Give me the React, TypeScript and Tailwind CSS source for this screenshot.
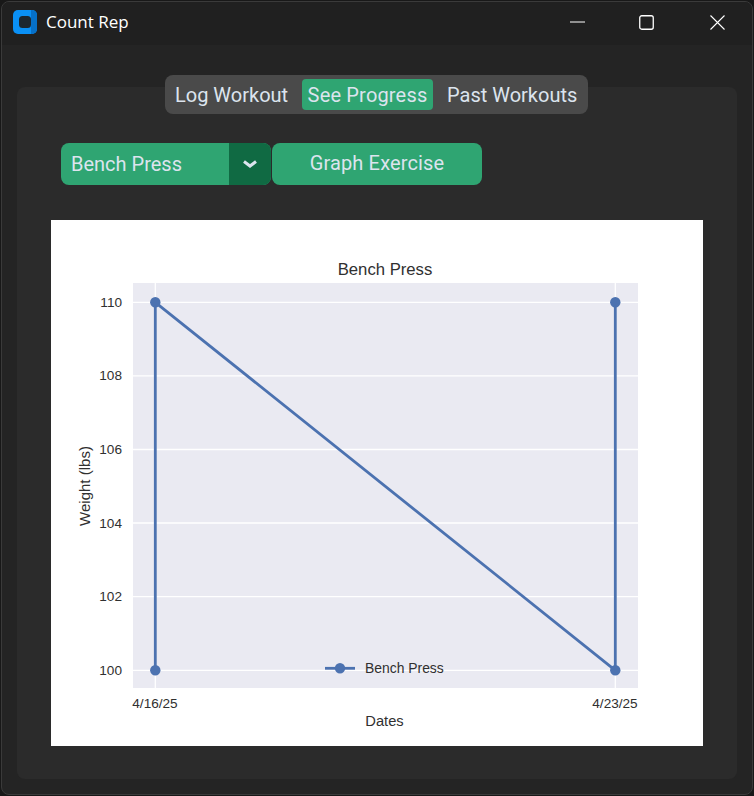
export default function App() {
  const grid = [
    { y: 302.3, label: "110" },
    { y: 375.9, label: "108" },
    { y: 449.5, label: "106" },
    { y: 523, label: "104" },
    { y: 596.6, label: "102" },
    { y: 670.3, label: "100" },
  ];
  const ox = 51;
  const oy = 220;
  return (
    <div className="w-[754px] h-[796px] bg-[#181818] p-px overflow-hidden">
      <div className="h-full flex flex-col bg-[#242424] rounded-[8px] border border-[#3a3a3a] overflow-hidden">
        <div className="h-[43px] shrink-0 bg-[#202020] flex items-center pl-[11px] pb-[3px]">
          <svg width="24" height="24" viewBox="0 0 24 24">
            <rect x="0" y="0" width="24" height="24" rx="5" fill="#0a90f5" />
            <path d="M18 0h1a5 5 0 0 1 5 5v14a5 5 0 0 1-5 5h-1z" fill="#0670c8" />
            <rect x="6" y="6" width="12" height="12" rx="3.5" fill="#1c2730" />
          </svg>
          <span className="ml-[9px] text-[17px] text-white font-['Open_Sans',sans-serif]">Count Rep</span>
          <div className="ml-auto flex items-center">
            <svg className="mr-[54px]" width="15" height="2" viewBox="0 0 15 2">
              <path d="M0 1h15" stroke="#fff" strokeWidth="1" />
            </svg>
            <svg className="mr-[56px]" width="15" height="15" viewBox="0 0 15 15" fill="none">
              <rect x="0.75" y="0.75" width="13.5" height="13.5" rx="2" stroke="#fff" strokeWidth="1.3" />
            </svg>
            <svg className="mr-[27px]" width="15" height="15" viewBox="0 0 15 15" fill="none">
              <path d="M0.5 0.5l14 14M14.5 0.5l-14 14" stroke="#fff" strokeWidth="1.1" />
            </svg>
          </div>
        </div>
        <div className="flex-1 flex flex-col px-[15px] pb-[15px] min-h-0">
          <div className="relative z-10 self-start ml-[148px] mt-[30px] h-[39px] w-[423px] flex items-center pl-[10px] bg-[#4a4a4a] rounded-[8px] text-[20px] text-[#dce4ee] font-['Roboto',sans-serif]">
            <span className="w-[127px] whitespace-nowrap">Log Workout</span>
            <span className="w-[131px] h-[31px] flex items-center justify-center whitespace-nowrap bg-[#2fa572] rounded-[4px] tracking-[0.17px]">See Progress</span>
            <span className="ml-[14px] whitespace-nowrap">Past Workouts</span>
          </div>
          <div className="-mt-[27px] flex-1 bg-[#2b2b2b] rounded-[8px] pt-[56px] pl-[34px]">
            <div className="flex gap-px pl-[10px] h-[42px] text-[20px] text-[#dce4ee] font-['Roboto',sans-serif]">
              <div className="w-[210px] flex bg-[#2fa572] rounded-[8px] overflow-hidden">
                <span className="flex-1 pl-[10px] leading-[42px]">Bench Press</span>
                <div className="w-[42px] bg-[#106a43] flex items-center justify-center">
                  <svg width="14" height="8" viewBox="0 0 14 8" fill="none">
                    <path d="M1 1.5l6 4.5 6-4.5" stroke="#dce4ee" strokeWidth="3" />
                  </svg>
                </div>
              </div>
              <div className="w-[210px] bg-[#2fa572] rounded-[8px] flex items-center justify-center pb-[2px] tracking-[0.14px]">Graph Exercise</div>
            </div>
            <div className="mt-[35px] w-[652px] h-[526px] bg-white">
              <svg width="652" height="526" viewBox={`${ox} ${oy} 652 526`} fontFamily="'Liberation Sans', sans-serif" fill="#303030">
                <rect x="133" y="283" width="505" height="405" fill="#eaeaf2" />
                {grid.map((g) => (
                  <g key={g.label}>
                    <path d={`M133 ${g.y}H638`} stroke="#fff" strokeWidth="1.3" />
                    <text x="122" y={g.y + 4.5} fontSize="13.6" textAnchor="end">{g.label}</text>
                  </g>
                ))}
                <path d="M155.3 283V688M615.3 283V688" stroke="#fff" strokeWidth="1.3" />
                <path d="M155.3 670.3V302.3L615.3 670.3V302.3" fill="none" stroke="#4c72b0" strokeWidth="2.8" strokeLinejoin="round" />
                {[[155.3, 670.3], [155.3, 302.3], [615.3, 670.3], [615.3, 302.3]].map(([x, y]) => (
                  <circle key={`${x}-${y}`} cx={x} cy={y} r="5.2" fill="#4c72b0" />
                ))}
                <path d="M325 668.3H355" stroke="#4c72b0" strokeWidth="2.8" />
                <circle cx="340" cy="668.3" r="5.2" fill="#4c72b0" />
                <text x="365" y="673" fontSize="13.9">Bench Press</text>
                <text x="385" y="275" fontSize="16.7" textAnchor="middle">Bench Press</text>
                <text x="155" y="707.5" fontSize="13.6" textAnchor="middle">4/16/25</text>
                <text x="615" y="707.5" fontSize="13.6" textAnchor="middle">4/23/25</text>
                <text x="384.5" y="726" fontSize="14.7" textAnchor="middle">Dates</text>
                <text transform="translate(90 486) rotate(-90)" fontSize="15" textAnchor="middle">Weight (lbs)</text>
              </svg>
            </div>
          </div>
        </div>
      </div>
    </div>
  );
}
